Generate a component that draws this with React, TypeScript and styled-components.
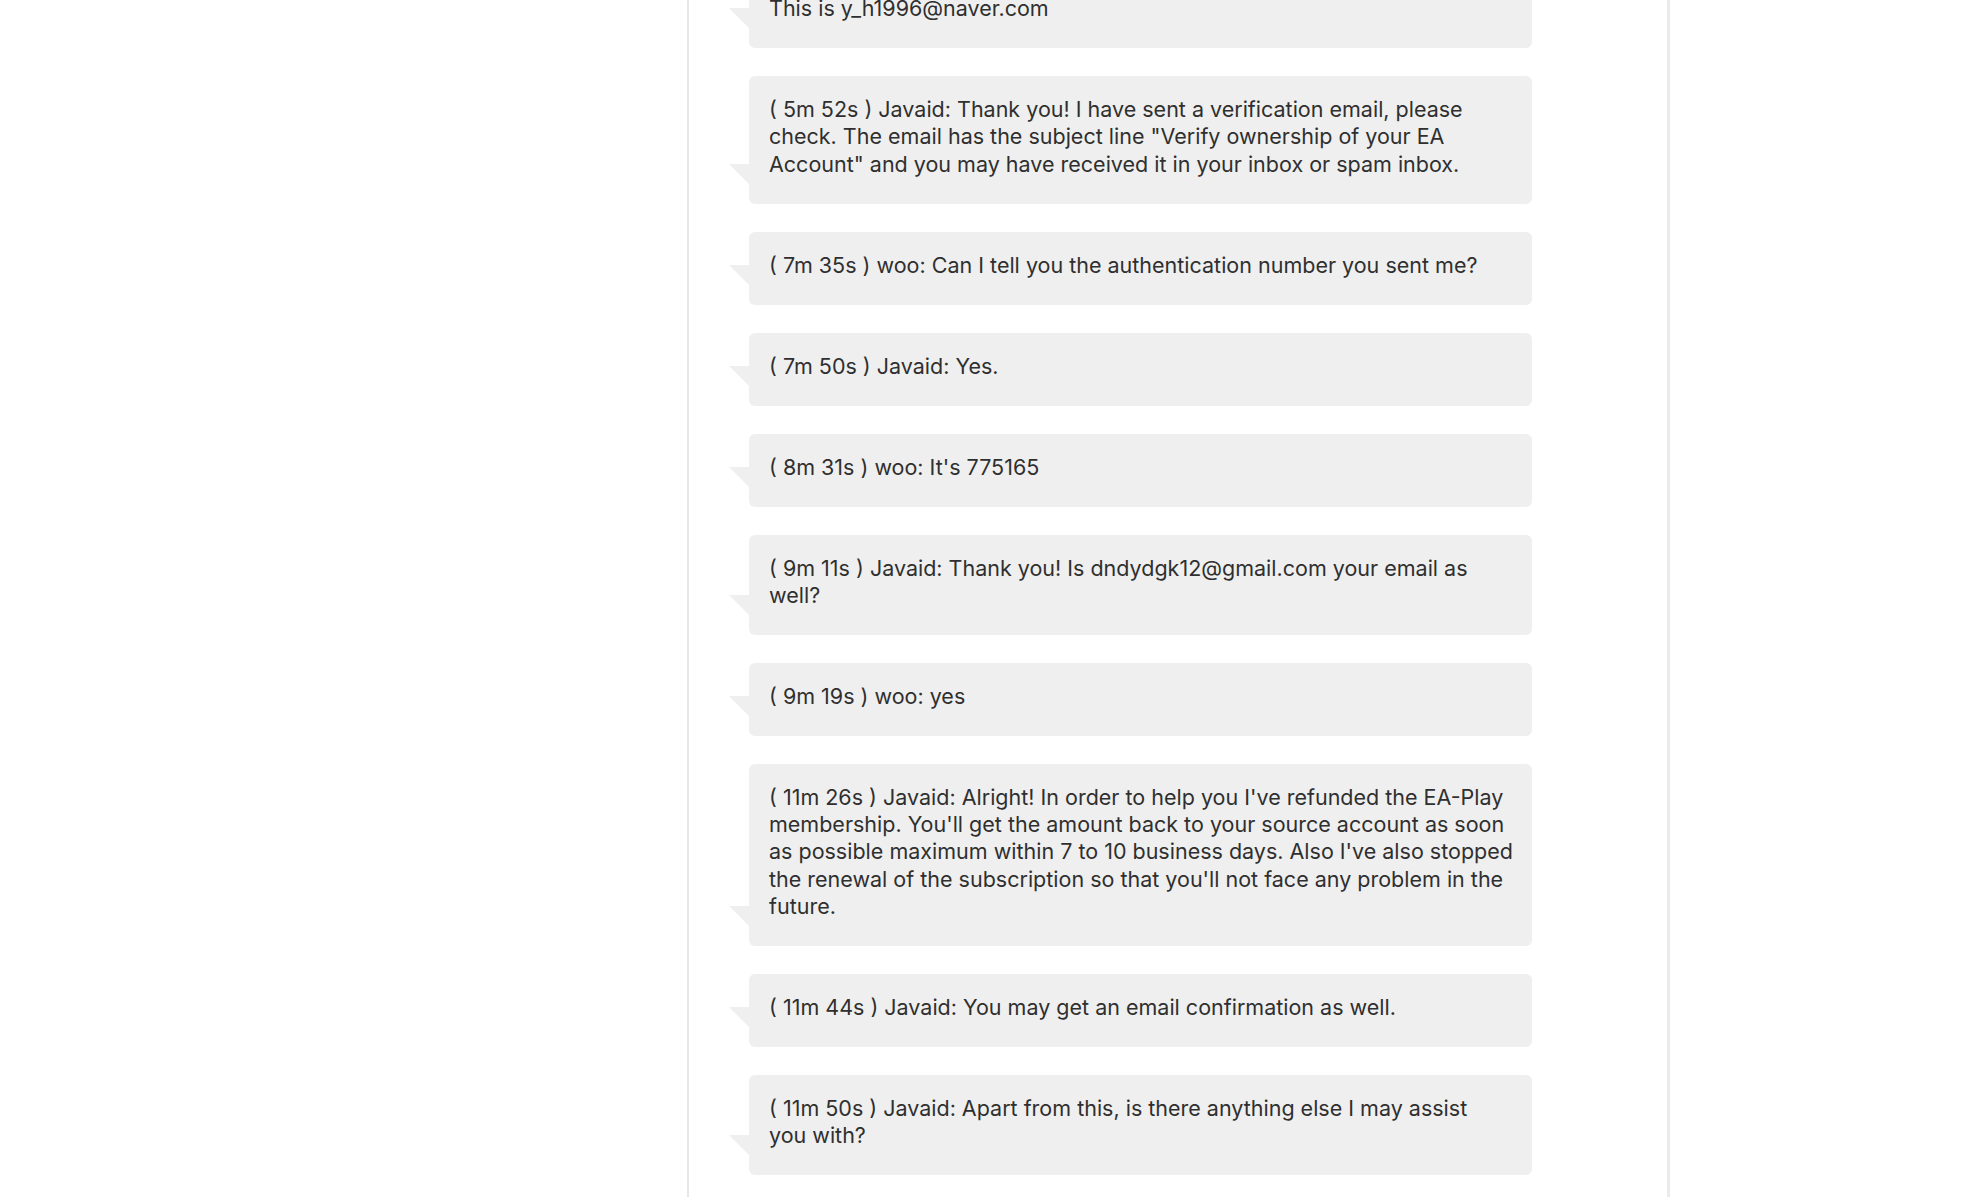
import React from "react";
import styled, { createGlobalStyle } from "styled-components";

const GlobalStyle = createGlobalStyle`
  html, body {
    margin: 0;
    padding: 0;
    background: #ffffff;
    overflow: hidden;
  }
  body {
    font-family: Inter, "Noto Sans", "Liberation Sans", sans-serif;
  }
`;

const Page = styled.div`
  display: flex;
  min-height: 100vh;
  background: #ffffff;
`;

const Column = styled.main`
  margin-left: 687px;
  width: 983px;
  min-height: 100vh;
  border-left: 2px solid #e7e7e7;
  border-right: 3px solid #ebebeb;
  padding: 0 135px 0 60px;
  box-sizing: border-box;
`;

const Thread = styled.ul`
  list-style: none;
  margin: -25px 0 0 0;
  padding: 0;
  display: flex;
  flex-direction: column;
  gap: 27.75px;
`;

const Bubble = styled.li`
  position: relative;
  background: #efefef;
  border-radius: 6px;
  padding: 20px 10px 26px 20px;
  color: #2f2f2f;
  font-size: 21.5px;
  line-height: 27.25px;
  white-space: pre-line;

  &::before {
    content: "";
    position: absolute;
    left: -20px;
    bottom: 20px;
    width: 0;
    height: 0;
    border-top: 20px solid #efefef;
    border-left: 20px solid transparent;
  }
`;

const messages: string[] = [
  "This is y_h1996@naver.com",
  '( 5m 52s ) Javaid: Thank you! I have sent a verification email, please\ncheck. The email has the subject line "Verify ownership of your EA\nAccount" and you may have received it in your inbox or spam inbox.',
  "( 7m 35s ) woo: Can I tell you the authentication number you sent me?",
  "( 7m 50s ) Javaid: Yes.",
  "( 8m 31s ) woo: It's 775165",
  "( 9m 11s ) Javaid: Thank you! Is dndydgk12@gmail.com your email as\nwell?",
  "( 9m 19s ) woo: yes",
  "( 11m 26s ) Javaid: Alright! In order to help you I've refunded the EA-Play\nmembership. You'll get the amount back to your source account as soon\nas possible maximum within 7 to 10 business days. Also I've also stopped\nthe renewal of the subscription so that you'll not face any problem in the\nfuture.",
  "( 11m 44s ) Javaid: You may get an email confirmation as well.",
  "( 11m 50s ) Javaid: Apart from this, is there anything else I may assist\nyou with?",
];

export default function App() {
  return (
    <>
      <GlobalStyle />
      <Page>
        <Column>
          <Thread>
            {messages.map((m, i) => (
              <Bubble key={i}>{m}</Bubble>
            ))}
          </Thread>
        </Column>
      </Page>
    </>
  );
}
